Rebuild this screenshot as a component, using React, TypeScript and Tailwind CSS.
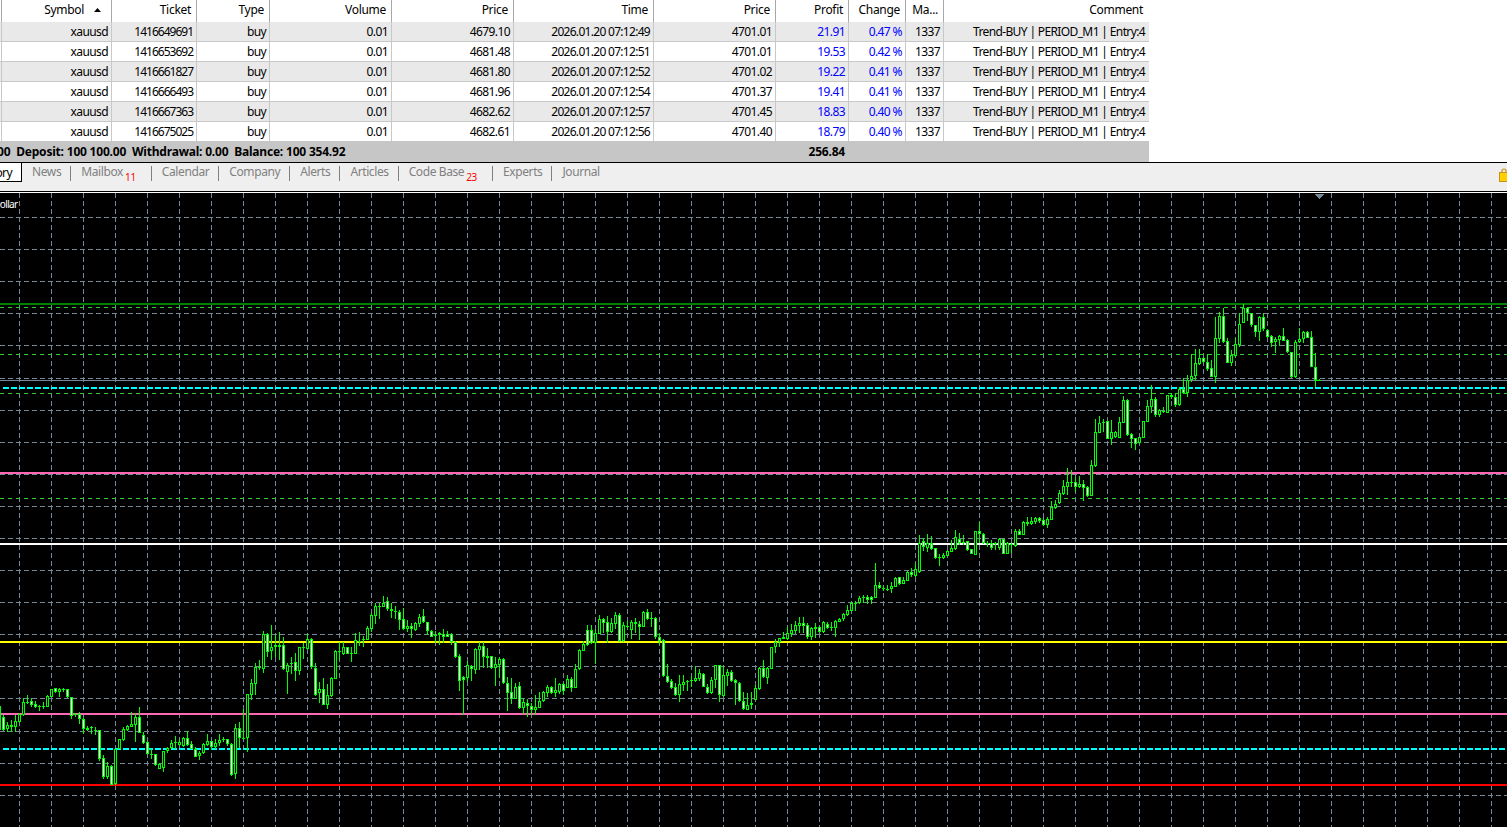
import React from "react";

type C = [number, number, number, number, number?];

const A: C[] = [
[382,420,375,422,1],[405,416,395,425],[405,410,390,425,1],[394,410,375,425],[372,395,370,397],[337,375,325,378],[335,339,316,343,1],[333,345,325,350,1],[343,350,332,354,1],[348,349,345,362],[348,349,336,358],[319,350,316,352],[298,320,296,322],[295,305,293,308,1],[298,305,293,320],[297,298,293,306],[298,321,296,323,1],[322,377,320,387,1],[372,374,370,380],[373,388,366,402,1],[388,418,385,432,1],[415,419,407,424,1],[412,414,408,432],[420,421,412,434],[421,506,419,513,1],[505,560,495,566,1],[528,560,515,568],[528,584,525,586,1],[478,581,476,584],[448,476,446,478],[417,449,410,452],[409,419,405,424],[403,410,366,412],[381,404,370,456],[381,428,350,430,1],[436,458,425,462,1],[457,493,452,495,1],[491,493,478,506],[493,524,491,527,1],[523,536,518,538],[484,534,482,545],[473,484,470,488],[459,473,450,476],[457,459,438,476],[457,466,448,468],[444,467,442,470],[444,464,424,467,1],[463,476,454,478,1],[476,500,472,502,1],[489,499,482,510],[463,490,460,492],[454,465,432,468],[454,472,452,480,1],[460,472,448,476],[450,460,432,468],[447,451,442,456,1],[448,463,446,468,1],[463,556,458,559,1],[415,553,403,567],[415,443,396,475,1],[443,445,358,448],[313,445,311,485],[280,314,267,330],[232,281,220,314],[230,235,210,241],[133,236,124,250],[133,185,130,200,1],[172,182,105,210],[165,172,136,202],[165,170,126,210],[165,238,142,240,1],[224,245,220,311],[218,220,200,252],[217,242,188,272,1],[172,242,170,254],[172,174,160,206],[148,176,132,178],[148,232,144,236,1],[233,314,220,318,1],[298,308,276,340],[298,344,264,346,1],[316,346,282,356],[265,318,262,320],[184,266,180,268],[183,187,155,210],[172,191,155,195],[172,191,170,192,1],[189,190,172,216],[151,191,130,192],[153,155,126,168],[148,151,138,172],[115,149,108,150],[76,117,70,126],[49,77,38,102],[48,49,40,86],[38,50,18,52],[34,58,22,62,1],[58,64,40,84,1],[64,66,48,88],[67,90,60,120,1],
[88,116,54,120,1],[108,117,90,125],[108,116,98,143,1],[100,120,96,122],[82,102,72,110],[79,97,58,100,1],[97,122,95,135,1],[124,140,120,142,1],[136,139,124,160],[130,136,126,165,1],[131,140,118,158,1],[133,140,122,142,1],[133,156,130,164,1],[155,200,152,203,1],[198,272,193,304,1],[262,269,258,374,1],[226,263,214,275],[227,236,224,273,1],[178,239,175,251],[169,179,155,240],[169,200,155,233,1],[198,203,175,233],[199,233,197,236,1],[223,233,202,288],[207,225,202,264],[207,278,204,281,1],[278,308,262,362,1],[305,326,264,342,1],[290,326,280,328],[289,353,276,358,1],[337,353,323,372],[338,347,328,380,1],[347,359,338,375,1],[352,359,316,375],[333,353,306,355],[307,334,304,336],[292,308,286,320],[292,309,288,312,1],[301,308,264,320],[283,305,280,312],[283,302,280,316,1],[268,293,256,294],[268,293,262,306,1],[236,293,222,294],[181,237,178,240],[163,182,152,184],[121,165,105,168,1],[121,158,104,162,1],[130,158,118,222],[88,131,76,133],[88,98,84,128,1],[95,125,78,160,1],[100,126,84,130],[76,101,66,118],[76,153,70,156,1],[106,153,96,155],[107,112,92,115],[97,119,90,148],[97,103,84,130,1],[103,110,94,150,1],[66,110,62,112],[66,86,58,90,1],[85,88,66,110],[85,142,82,146,1],[142,152,128,165,1],[151,257,148,260,1],[257,275,222,278,1],[274,293,268,297,1],[292,315,278,318,1],[283,315,255,336],[275,284,254,304],[272,274,270,304],[271,273,258,292],[265,274,228,276],[250,266,238,272],[252,290,248,292,1],[290,308,282,312,1],[271,309,262,311],[226,270,224,295],[226,314,224,336,1],[256,318,228,320],[246,257,238,288],[246,272,240,276,1],[271,280,266,345,1],[280,332,276,336,1],[332,358,306,360,1],[346,359,308,360],[340,346,306,358,1],[295,329,285,331],[235,297,230,299],[235,262,210,264,1],[235,263,232,282],[172,236,170,238],[155,171,148,190],[145,157,143,170],[142,146,126,148],[130,147,112,150],[121,132,102,140],[106,122,94,132],[100,107,82,128],
[100,107,82,130,1],[106,140,100,148,1],[113,142,110,150],[111,116,100,145],[112,126,108,128,1],[96,126,93,128],[102,114,95,118,1],[111,115,95,122],[93,113,90,140],[87,95,84,97],[72,88,68,92],
];

const B: C[] = [
[690,705,675,708],[670,692,665,694],[668,670,664,692],[654,670,648,672],[651,655,646,670],[652,659,644,672,1],[652,660,648,672,1],[615,653,548,655],[615,625,605,628,1],[624,628,618,634],[626,629,615,632],[618,628,605,638],[594,620,590,622],[592,611,590,614,1],[600,611,590,612],[576,602,574,604],[576,586,565,590,1],[568,587,550,590],[488,575,465,578],[484,502,475,512,1],[490,503,462,516],[490,507,468,510,1],[505,533,503,536,1],[531,533,522,558],[526,533,520,536],[514,527,510,529],[504,515,480,516],[472,508,450,510],[476,490,460,495,1],[486,488,464,495],[484,509,482,512,1],[508,521,506,523,1],[454,524,452,526],[454,461,426,489,1],[462,489,458,491,1],[488,490,483,500],[490,503,480,510,1],[489,491,486,510],[477,503,475,510],[478,521,476,522,1],[490,521,487,523],[491,494,486,518],[454,497,446,500],[454,464,448,466,1],[427,464,424,466],[427,433,410,438,1],[424,433,412,436],[415,425,412,432],[415,423,410,428,1],[421,435,414,437,1],[418,434,412,444],[381,419,362,421],[373,383,360,386],[340,368,330,372],[319,342,300,344],[307,320,264,346],[305,308,270,322],[307,320,292,335,1],[313,321,288,324],[313,323,300,362,1],[320,347,318,350,1],[256,347,240,349],[157,258,118,262],[130,158,108,160],[126,130,118,156],[124,177,122,178,1],[156,177,120,196],[156,172,154,175],[127,173,112,175],[61,128,48,130],[61,165,58,168,1],[163,176,160,204,1],[175,193,173,210,1],[172,190,170,192],[124,173,122,175],[79,125,60,127],[58,80,15,98],[58,104,52,110,1],[91,104,88,112],[92,96,82,100],[46,98,44,100],[46,52,40,56],[52,75,40,82,1],[28,75,20,77],
];

const D: C[] = [
[778,790,745,792,1],[750,790,736,800],[737,750,672,755],[700,738,657,750],[685,702,657,706],[685,697,680,700,1],[697,717,672,722,1],[714,740,690,742,1],[625,740,560,758],[558,628,546,638],[558,635,534,638,1],[634,698,625,700,1],[675,698,660,707],[643,677,625,680],[583,645,550,650],[534,578,522,580],[534,550,530,572,1],[550,584,548,590,1],[586,605,584,622,1],[561,605,558,632],[561,598,550,602,1],[600,620,598,625,1],[619,638,615,650,1],[628,635,622,668],[619,629,616,648],[619,632,594,634,1],[631,665,628,668,1],[667,740,665,745,1],[637,740,630,745],[627,635,594,638],[606,628,604,640],[606,623,603,625,1],[622,710,603,712,1],[712,750,670,770,1],[750,751,748,752],
];

const px = (z: number, base: number) => Math.round(base + z / 3);

const candles = [
  ...A.map((c, i) => ({ c, n: i, base: 590 })),
  ...B.map((c, i) => ({ c, n: 211 + i, base: 380 })),
  ...D.map((c, i) => ({ c, n: 295 + i, base: 130 })),
];

function Candle({ c, n, base }: { c: C; n: number; base: number }) {
  const x = 3 + 4 * n;
  const t = px(c[0], base);
  const b = Math.max(px(c[1], base), t + 1);
  const h = Math.min(px(c[2], base), t);
  const l = Math.max(px(c[3], base), b);
  const tall = b - t > 2;
  return (
    <g>
      <rect x={x} y={h} width={1} height={l - h} fill="#00ff00" />
      <rect x={x - 1} y={t} width={3} height={b - t} fill="#00ff00" />
      {tall && <rect x={x} y={t + 1} width={1} height={b - t - 2} fill={c[4] ? "#ffffff" : "#000000"} />}
    </g>
  );
}

const hGrid = [217, 249, 281, 313, 345, 378, 410, 442, 474, 506, 538, 570, 602, 634, 666, 698, 731, 763, 795];
const vGrid = Array.from({ length: 47 }, (_, i) => 19 + 32 * i);

function Chart() {
  return (
    <svg width={1507} height={634} viewBox="0 193 1507 634" className="block" shapeRendering="crispEdges">
      <rect x={0} y={193} width={1507} height={634} fill="#000000" />
      {vGrid.map((x) => (
        <line key={x} x1={x + 0.5} x2={x + 0.5} y1={193} y2={827} stroke="#778899" strokeDasharray="5 3" />
      ))}
      {hGrid.map((y) => (
        <line key={y} x1={0} x2={1507} y1={y + 0.5} y2={y + 0.5} stroke="#778899" strokeDasharray="5 3" />
      ))}
      <rect x={0} y={303} width={1507} height={2} fill="#008000" />
      {[307, 354, 393, 498].map((y) => (
        <line key={y} x1={0} x2={1507} y1={y + 0.5} y2={y + 0.5} stroke="#32cd32" strokeDasharray="4 4" />
      ))}
      <rect x={0} y={380} width={1507} height={1} fill="#778899" />
      <line x1={3} x2={1507} y1={388} y2={388} stroke="#00ffff" strokeWidth={2} strokeDasharray="6 2" />
      <line x1={3} x2={1507} y1={749} y2={749} stroke="#00ffff" strokeWidth={2} strokeDasharray="6 2" />
      <rect x={0} y={472} width={1507} height={2} fill="#ff69b4" />
      <rect x={0} y={713} width={1507} height={2} fill="#ff69b4" />
      <rect x={0} y={543} width={1507} height={2} fill="#ffffff" />
      <rect x={0} y={641} width={1507} height={2} fill="#ffff00" />
      <rect x={0} y={784} width={1507} height={2} fill="#ff0000" />
      <rect x={-2} y={706} width={3} height={24} fill="#00ff00" />
      {candles.map((k) => (
        <Candle key={k.n} {...k} />
      ))}
      <rect x={1315} y={380} width={5} height={1} fill="#00ff00" />
      <polygon points="1315,194 1324,194 1319.5,199" fill="#778899" />
    </svg>
  );
}

const widths = ["w-[111px]", "w-[85px]", "w-[73px]", "w-[122px]", "w-[122px]", "w-[140px]", "w-[122px]", "w-[73px]", "w-[57px]", "w-[38px]", "w-[205px]"];

const heads = ["Symbol", "Ticket", "Type", "Volume", "Price", "Time", "Price", "Profit", "Change", "Ma...", "Comment"];

const rows = [
  ["1416649691", "4679.10", "2026.01.20 07:12:49", "4701.01", "21.91", "0.47 %"],
  ["1416653692", "4681.48", "2026.01.20 07:12:51", "4701.01", "19.53", "0.42 %"],
  ["1416661827", "4681.80", "2026.01.20 07:12:52", "4701.02", "19.22", "0.41 %"],
  ["1416666493", "4681.96", "2026.01.20 07:12:54", "4701.37", "19.41", "0.41 %"],
  ["1416667363", "4682.62", "2026.01.20 07:12:57", "4701.45", "18.83", "0.40 %"],
  ["1416675025", "4682.61", "2026.01.20 07:12:56", "4701.40", "18.79", "0.40 %"],
];

function HeaderRow() {
  return (
    <div className="flex h-[22px] w-[1149px] bg-white pl-px tracking-[-0.3px] text-black">
      {heads.map((h, i) => (
        <div
          key={i}
          className={`${widths[i]} ${i === 0 ? "border-l" : ""} ${i === 10 ? "pr-[6px]" : "border-r pr-[5px]"} flex shrink-0 items-center justify-end border-[#a8a8a8] pb-[3px] leading-[19px]`}
        >
          {h}
          {i === 0 && (
            <svg width="7" height="4" viewBox="0 0 7 4" className="ml-[10px] mr-[5px]">
              <polygon points="3.5,0 7,4 0,4" fill="#000000" />
            </svg>
          )}
        </div>
      ))}
    </div>
  );
}

function DataRow({ r, idx }: { r: string[]; idx: number }) {
  const cells = ["xauusd", r[0], "buy", "0.01", r[1], r[2], r[3], r[4], r[5], "1337", "Trend-BUY | PERIOD_M1 | Entry:4"];
  const last = idx === rows.length - 1;
  return (
    <div className={`flex w-[1149px] pl-px ${last ? "h-[19px]" : "h-[20px] border-b border-[#c8c8c8]"} ${idx % 2 === 0 ? "bg-[#e9e9e9]" : "bg-white"}`}>
      {cells.map((c, i) => (
        <div
          key={i}
          className={`${widths[i]} ${i === 0 ? "border-l" : ""} ${i === 10 ? "pr-[4px] tracking-[-0.63px]" : "border-r pr-[3px]"} ${i === 7 || i === 8 ? "text-[#0000ff]" : "text-black"} ${i === 1 ? "tracking-[-1px]" : ""} ${i === 5 ? "tracking-[-0.7px]" : ""} flex shrink-0 items-center justify-end whitespace-nowrap border-[#c8c8c8]`}
        >
          {c}
        </div>
      ))}
    </div>
  );
}

const tabs: { name: string; badge?: string; end: string }[] = [
  { name: "News", end: "pr-[10px]" },
  { name: "Mailbox", badge: "11", end: "pr-[16px]" },
  { name: "Calendar", end: "pr-[10px]" },
  { name: "Company", end: "pr-[10px]" },
  { name: "Alerts", end: "pr-[10px]" },
  { name: "Articles", end: "pr-[10px]" },
  { name: "Code Base", badge: "23", end: "pr-[16px]" },
  { name: "Experts", end: "pr-[10px]" },
  { name: "Journal", end: "" },
];

function TabBar() {
  return (
    <div className="flex h-[30px] w-full overflow-hidden border-y border-black bg-[#efefef]">
      <div className="flex h-[19px] w-[22px] shrink-0 items-start justify-end overflow-hidden border-r border-b border-black bg-white pr-[9px] text-black">
        <span className="shrink-0">History</span>
      </div>
      <div className="ml-[10px] flex items-start text-[#808080] tracking-[-0.4px]">
        {tabs.map((t, i) => (
          <div key={t.name} className={`flex h-[18px] items-start ${t.end} ${i < tabs.length - 1 ? "relative mr-[10px]" : ""}`}>
            <span className="leading-[18px]">{t.name}</span>
            {t.badge && <span className="ml-[2px] mt-[8px] text-[10px] leading-[12px] tracking-[-0.3px] text-[#ff0000]">{t.badge}</span>}
            {i < tabs.length - 1 && <span className="absolute right-0 top-[3px] h-[15px] w-px bg-[#808080]" />}
          </div>
        ))}
      </div>
      <svg width="8" height="14" viewBox="0 0 8 14" className="ml-auto mt-[5px] shrink-0">
        <path d="M3 5 V3 Q3 1 5 1 Q7 1 7 3 V5" fill="none" stroke="#c8921a" strokeWidth="1.2" />
        <rect x="0.5" y="4.5" width="8" height="9" fill="#ffd000" stroke="#c8921a" />
      </svg>
    </div>
  );
}

export default function App() {
  return (
    <div
      className="flex h-[827px] w-[1507px] flex-col overflow-hidden bg-white text-[12px] leading-[19px] tracking-[-0.6px]"
      style={{ fontFamily: '"Noto Sans", sans-serif' }}
    >
      <HeaderRow />
      {rows.map((r, i) => (
        <DataRow key={i} r={r} idx={i} />
      ))}
      <div className="flex h-[21px] w-[1149px] shrink-0 items-center overflow-hidden bg-[#c6c6c6] font-bold text-black tracking-[-0.2px]">
        <div className="-ml-[3px] w-[703px] shrink-0 whitespace-pre">00  Deposit: 100 100.00  Withdrawal: 0.00  Balance: 100 354.92</div>
        <div className="w-[145px] shrink-0 text-right">256.84</div>
      </div>
      <TabBar />
      <div className="h-px w-full shrink-0 bg-white" />
      <div className="relative flex-1 overflow-hidden">
        <Chart />
        <span className="absolute -left-[7px] top-[5px] text-[10px] leading-[13px] text-white">Dollar</span>
      </div>
    </div>
  );
}
